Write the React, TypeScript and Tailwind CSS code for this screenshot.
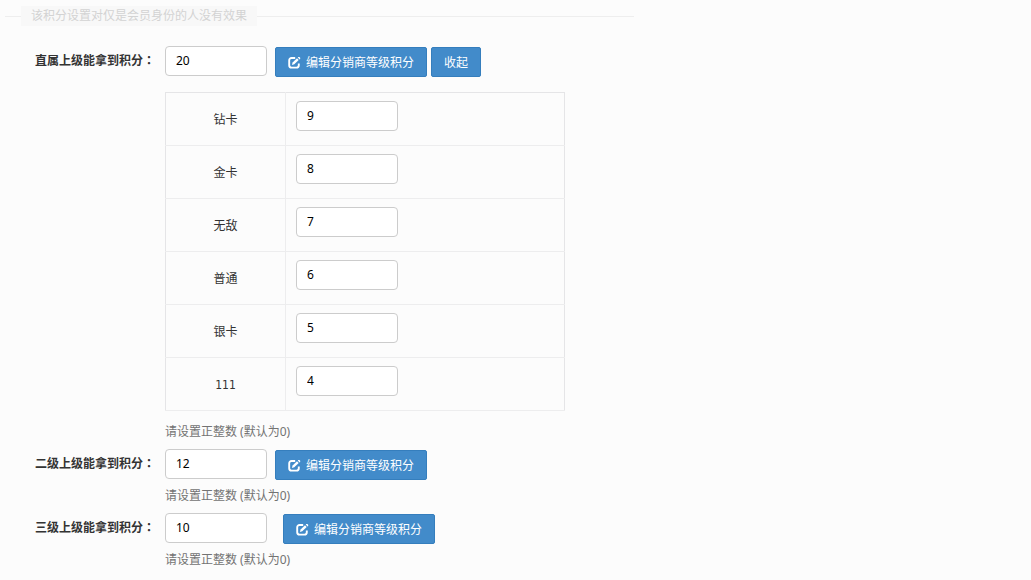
import React, { useState } from "react";

const levels = [
  { name: "钻卡", points: "9" },
  { name: "金卡", points: "8" },
  { name: "无敌", points: "7" },
  { name: "普通", points: "6" },
  { name: "银卡", points: "5" },
  { name: "111", points: "4" },
];

const inputClass =
  "block h-[30px] w-[102px] rounded border border-[#cccccc] bg-white px-2.5 pb-0.5 text-xs text-black outline-none focus:border-[#66afe9]";

const buttonClass =
  "flex h-[30px] cursor-pointer items-center gap-[5px] rounded-xs border border-[#357ebd] bg-[#428bca] px-3 pt-0.5 text-xs whitespace-nowrap text-white hover:bg-[#3276b1]";

function EditIcon() {
  return (
    <svg viewBox="0 0 13 13" className="h-[13px] w-[13px]" fill="none" aria-hidden="true">
      <path
        d="M7.2 1H3.6A2.4 2.4 0 0 0 1.2 3.4v4.8a2.4 2.4 0 0 0 2.4 2.4h4.8a2.4 2.4 0 0 0 2.4-2.4V6.4"
        stroke="currentColor"
        strokeWidth="1.9"
      />
      <path d="M3.9 8.1 4.6 5.6 9 1.2l1.7 1.7-4.4 4.4z" fill="currentColor" />
      <path d="m9.8.5.4-.5h1.2l.8.7v1.2l-.6.5z" fill="currentColor" />
    </svg>
  );
}

function EditButton({ onClick }: { onClick?: () => void }) {
  return (
    <button type="button" className={buttonClass} onClick={onClick}>
      <EditIcon />
      <span>编辑分销商等级积分</span>
    </button>
  );
}

type FieldRowProps = {
  id: string;
  label: string;
  value: string;
  wideGap?: boolean;
  actions: React.ReactNode;
  children?: React.ReactNode;
};

function FieldRow({ id, label, value, wideGap, actions, children }: FieldRowProps) {
  return (
    <div className="flex items-start">
      <label htmlFor={id} className="w-[165px] shrink-0 pt-[5px] pr-2.5 text-right leading-[18px] font-bold text-[#333333]">
        {label}
        <span className="font-['Noto_Sans_CJK_TC',sans-serif]">：</span>
      </label>
      <div className="min-w-0 flex-1">
        <div className={wideGap ? "flex items-start gap-4" : "flex items-start gap-2"}>
          <input id={id} type="text" defaultValue={value} className={inputClass} />
          <div className="flex gap-1 pt-px">{actions}</div>
        </div>
        {children}
        <p className="mt-1.5 leading-5 text-[#737373]">请设置正整数 (默认为0)</p>
      </div>
    </div>
  );
}

function LevelTable() {
  return (
    <table className="mt-[15px] mb-[11px] w-full max-w-[400px] border-collapse border border-[#e5e5e7]">
      <tbody>
        {levels.map((level, index) => (
          <tr key={level.name} className="border-b border-[#ededee]">
            <th
              scope="row"
              className="w-[120px] border-r border-[#ededee] p-0 pt-0.5 text-center font-['DejaVu_Sans_Condensed','Noto_Sans_CJK_SC',sans-serif] font-normal text-[#333333]"
            >
              <label htmlFor={`level-${index}`}>{level.name}</label>
            </th>
            <td className="px-2.5 pt-2 pb-3.5">
              <input id={`level-${index}`} type="text" defaultValue={level.points} className={inputClass} />
            </td>
          </tr>
        ))}
      </tbody>
    </table>
  );
}

export default function App() {
  const [open, setOpen] = useState(true);

  return (
    <main className="min-h-screen bg-[#fcfcfc] pt-1.5 font-['Noto_Sans','Noto_Sans_CJK_SC',sans-serif] text-xs">
      <div className="ml-[5px] flex max-w-[629px] items-center">
        <span className="h-px w-4 bg-[#eeeeee]" />
        <h2 className="bg-[#f8f8f8] px-2.5 leading-5 text-[#d3d3d3]">该积分设置对仅是会员身份的人没有效果</h2>
        <span className="h-px flex-1 bg-[#eeeeee]" />
      </div>
      <form className="mt-5 flex flex-col gap-[7px]">
        <FieldRow
          id="parent-one"
          label="直属上级能拿到积分"
          value="20"
          actions={
            <>
              <EditButton onClick={() => setOpen(true)} />
              <button type="button" className={buttonClass} onClick={() => setOpen(false)}>
                收起
              </button>
            </>
          }
        >
          {open && <LevelTable />}
        </FieldRow>
        <FieldRow id="parent-two" label="二级上级能拿到积分" value="12" actions={<EditButton />} />
        <FieldRow id="parent-three" label="三级上级能拿到积分" value="10" wideGap actions={<EditButton />} />
      </form>
    </main>
  );
}
